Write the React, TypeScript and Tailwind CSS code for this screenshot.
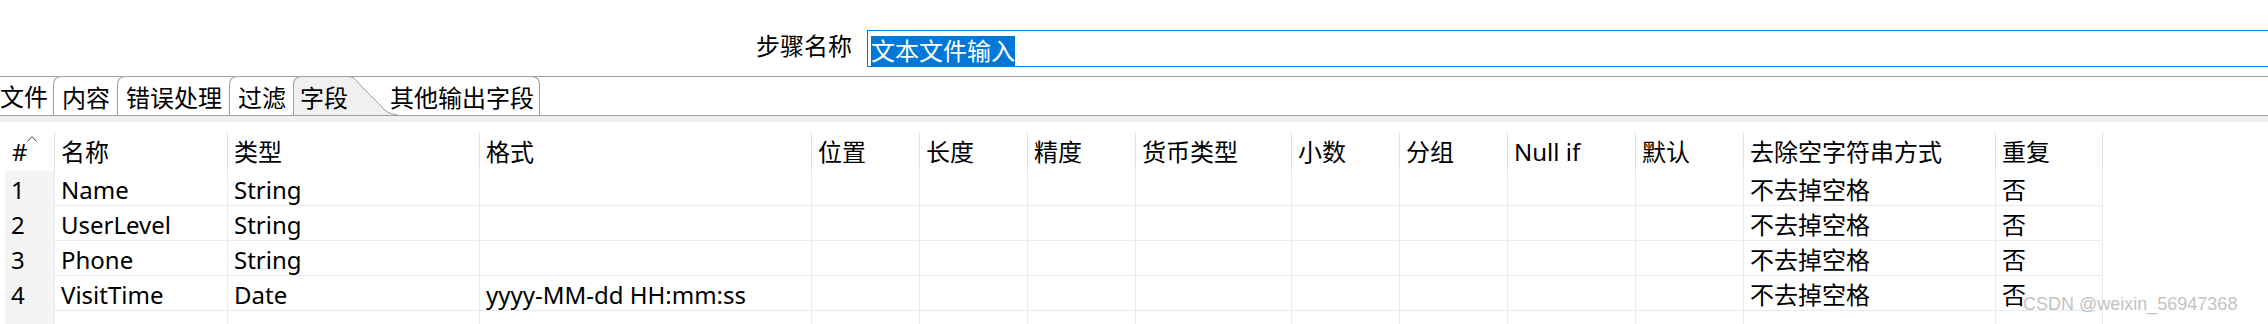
import type { ReactNode } from 'react'

type Column = { label: string; width: string }

const columns: Column[] = [
  { label: '名称', width: 'w-[173px]' },
  { label: '类型', width: 'w-[252px]' },
  { label: '格式', width: 'w-[332px]' },
  { label: '位置', width: 'w-[108px]' },
  { label: '长度', width: 'w-[108px]' },
  { label: '精度', width: 'w-[108px]' },
  { label: '货币类型', width: 'w-[156px]' },
  { label: '小数', width: 'w-[108px]' },
  { label: '分组', width: 'w-[108px]' },
  { label: 'Null if', width: 'w-[128px]' },
  { label: '默认', width: 'w-[108px]' },
  { label: '去除空字符串方式', width: 'w-[252px]' },
  { label: '重复', width: 'w-[107px]' },
]

const rows: string[][] = [
  ['Name', 'String', '', '', '', '', '', '', '', '', '', '不去掉空格', '否'],
  ['UserLevel', 'String', '', '', '', '', '', '', '', '', '', '不去掉空格', '否'],
  ['Phone', 'String', '', '', '', '', '', '', '', '', '', '不去掉空格', '否'],
  ['VisitTime', 'Date', 'yyyy-MM-dd HH:mm:ss', '', '', '', '', '', '', '', '', '不去掉空格', '否'],
  ['', '', '', '', '', '', '', '', '', '', '', '', ''],
]

function Tab({ width, children }: { width: string; children: ReactNode }) {
  return (
    <div className={`${width} -mt-[1px] h-[39px] shrink-0 rounded-tl-[8px] border-l border-t border-[#a0a0a0] bg-white pl-[8px] pt-[7px] leading-[28px]`}>
      {children}
    </div>
  )
}

export default function App() {
  return (
    <div className="relative h-[324px] w-[2268px] overflow-hidden bg-white font-['Noto_Sans','Noto_Sans_CJK_SC',sans-serif] text-[24px] text-black">
      {/* step name */}
      <div className="flex h-[76px] items-start overflow-hidden pl-[756px] pt-[30px]">
        <span className="mt-[2px] w-[111px] shrink-0 leading-[28px]">步骤名称</span>
        <div className="h-[37px] w-[1500px] shrink-0 border border-[#0078d7] pl-[3px] pt-[2px]">
          <span className="inline-block h-[30px] bg-[#0078d7] leading-[30px] text-white">文本文件输入</span>
        </div>
      </div>

      {/* tabs */}
      <div className="flex h-[40px] border-y border-[#a0a0a0]">
        <div className="-mt-[1px] h-[39px] w-[53px] shrink-0 pt-[7px] leading-[28px]">文件</div>
        <Tab width="w-[64px]">内容</Tab>
        <Tab width="w-[112px]">错误处理</Tab>
        <Tab width="w-[64px]">过滤</Tab>
        <div className="-mt-[1px] h-[39px] w-[55px] shrink-0 rounded-tl-[8px] border-l border-t border-[#a0a0a0] bg-[#f0f0f0] pl-[6px] pt-[7px] leading-[28px]">
          字段
        </div>
        <svg width="49" height="39" viewBox="0 0 49 39" className="-mt-[1px] shrink-0">
          <path d="M0,0.5 C6,0.5 9,5 13,10 L33,30 C37,35 42,38.5 49,38.5 L49,39 L0,39 Z" fill="#f0f0f0" />
          <path d="M0,0.5 C6,0.5 9,5 13,10 L33,30 C37,35 42,38.5 49,38.5" fill="none" stroke="#a0a0a0" strokeWidth="1" />
        </svg>
        <div className="relative -ml-[7px] -mt-[1px] h-[39px] w-[150px] shrink-0 rounded-tr-[8px] border-r border-t border-[#a0a0a0] pt-[7px] leading-[28px]">
          其他输出字段
        </div>
      </div>
      <div className="h-[6px] bg-[#f0f0f0]" />

      {/* table */}
      <div className="ml-[5px] pt-[10px]">
        <div className="flex">
          <div className="relative h-[39px] w-[50px] shrink-0 border-r border-[#e3e3e3] pl-[7px] pt-[6px] leading-[28px]">
            #
            <svg width="10" height="7" viewBox="0 0 10 7" className="absolute left-[22px] top-[3px]">
              <polyline points="0.5,6.5 5,1.5 9.5,6.5" fill="none" stroke="#404040" strokeWidth="1" />
            </svg>
          </div>
          {columns.map((col) => (
            <div key={col.label} className={`${col.width} h-[39px] shrink-0 border-r border-[#e3e3e3] pl-[6px] pt-[6px] leading-[28px] whitespace-nowrap`}>
              {col.label}
            </div>
          ))}
        </div>
        {rows.map((row, i) => (
          <div key={i} className="flex">
            <div className="h-[35px] w-[50px] shrink-0 border-r border-[#e8ecf2] bg-[#f4f4f4] pl-[6px] pt-[5px] leading-[28px]">
              {i < 4 ? i + 1 : ''}
            </div>
            {columns.map((col, j) => (
              <div key={col.label} className={`${col.width} h-[35px] shrink-0 border-b border-r border-[#e8ecf2] pl-[6px] pt-[5px] leading-[28px] whitespace-nowrap`}>
                {row[j]}
              </div>
            ))}
          </div>
        ))}
      </div>

      {/* watermark */}
      <span className="absolute left-[2023px] top-[292px] font-['Liberation_Sans',sans-serif] text-[18px] leading-[24px] whitespace-nowrap text-[#b4b4b4] opacity-80">
        CSDN @weixin_56947368
      </span>
    </div>
  )
}
